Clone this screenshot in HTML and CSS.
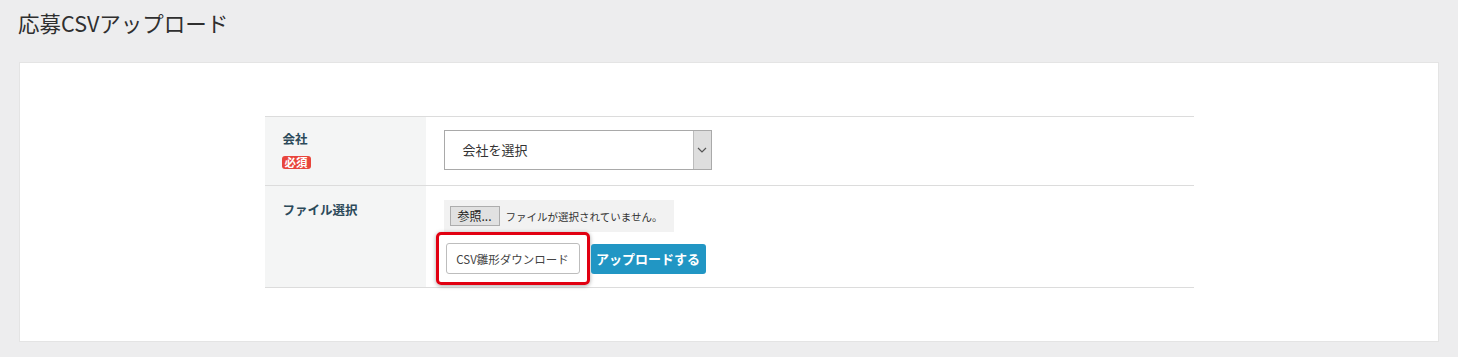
FILE: index.html
```html
<!DOCTYPE html>
<html lang="ja">
<head>
    <meta charset="UTF-8">
    <meta name="viewport" content="width=device-width, initial-scale=1.0">
    <title>応募CSVアップロード</title>
    <link rel="stylesheet" href="styles.css">
</head>
<body>
    <h1 class="page-title">応募CSVアップロード</h1>

    <div class="card">
        <table class="form-table">
            <tr>
                <th>
                    <span class="field-label">会社</span>
                    <span class="badge-required">必須</span>
                </th>
                <td>
                    <div class="select-box">
                        <span class="select-text">会社を選択</span>
                        <span class="select-arrow">
                            <svg width="10" height="6" viewBox="0 0 10 6" fill="none" stroke="#555" stroke-width="1.2">
                                <path d="M1 1l4 4 4-4"></path>
                            </svg>
                        </span>
                    </div>
                </td>
            </tr>
            <tr>
                <th class="file-label">
                    <span class="field-label">ファイル選択</span>
                </th>
                <td class="file-cell">
                    <div class="file-box">
                        <span class="file-button">参照...</span>
                        <span class="file-status">ファイルが選択されていません。</span>
                    </div>
                    <div class="actions">
                        <div class="highlight">
                            <button type="button" class="btn-template">CSV雛形ダウンロード</button>
                        </div>
                        <button type="button" class="btn-upload">アップロードする</button>
                    </div>
                </td>
            </tr>
        </table>
    </div>
</body>
</html>
```

FILE: styles.css
```css
* {
    margin: 0;
    padding: 0;
    box-sizing: border-box;
}

body {
    font-family: "Noto Sans CJK JP", "Noto Sans", sans-serif;
    background: #ededee;
    color: #333;
}

.page-title {
    font-size: 21.5px;
    font-weight: 400;
    line-height: 26px;
    padding: 10px 18px 26px;
    color: #2f2f2f;
}

.card {
    margin: 0 19px;
    height: 280px;
    background: #fff;
    border: 1px solid #e4e4e4;
    padding-top: 53px;
}

.form-table {
    width: 929px;
    margin: 0 auto;
    border-collapse: collapse;
    border-top: 1px solid #dcdcdc;
}

.form-table tr {
    border-bottom: 1px solid #dcdcdc;
}

.form-table th {
    width: 161px;
    background: #f4f5f5;
    text-align: left;
    vertical-align: top;
    padding: 13px 18px;
    font-weight: 700;
}

.form-table td {
    padding: 13px 18px;
    vertical-align: top;
}

.field-label {
    display: block;
    font-size: 12.5px;
    line-height: 18px;
    color: #2c4a5a;
}

.badge-required {
    display: inline-block;
    margin-top: 1px;
    margin-left: -1px;
    padding: 0 3px;
    font-size: 11.5px;
    line-height: 13px;
    color: #fff;
    background: #e8453c;
    border-radius: 3px;
}

.select-box {
    display: flex;
    width: 268px;
    height: 40px;
    border: 1px solid #a9a9a9;
    background: #fff;
}

.select-text {
    flex: 1;
    padding-left: 18px;
    font-size: 13px;
    line-height: 38px;
    color: #333;
}

.select-arrow {
    width: 18px;
    display: flex;
    align-items: center;
    justify-content: center;
    background: #dedede;
    border-left: 1px solid #bcbcbc;
}

.form-table th.file-label {
    padding-top: 15px;
}

.form-table td.file-cell {
    padding: 14px 18px 2px;
}

.file-box {
    display: flex;
    align-items: center;
    width: 230px;
    height: 32px;
    padding: 0 6px;
    background: #f2f2f2;
    white-space: nowrap;
}

.file-button {
    flex-shrink: 0;
    height: 20px;
    padding: 0 7px;
    font-size: 12px;
    line-height: 18px;
    color: #222;
    background: #e1e1e1;
    border: 1px solid #adadad;
}

.file-status {
    margin-left: 6px;
    font-size: 10.5px;
    color: #333;
}

.actions {
    display: flex;
    align-items: center;
    margin-left: -8px;
}

.highlight {
    padding: 8px 7px;
    border: 3px solid #e10011;
    border-radius: 5px;
    box-shadow: 0 1px 4px rgba(0, 0, 0, 0.35);
}

.btn-template {
    display: block;
    width: 134px;
    height: 31px;
    font-family: inherit;
    font-size: 11.5px;
    color: #444;
    background: #fff;
    border: 1px solid #bdbdbd;
    border-radius: 3px;
}

.btn-upload {
    width: 115px;
    height: 30px;
    margin-left: 1px;
    font-family: inherit;
    font-size: 13px;
    font-weight: 700;
    color: #fff;
    background: #2196c4;
    border: none;
    border-radius: 3px;
}
```
